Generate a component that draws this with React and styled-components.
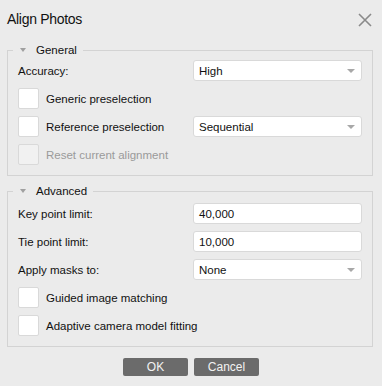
import React from "react";
import styled, { createGlobalStyle } from "styled-components";

const GlobalStyle = createGlobalStyle`
  body {
    margin: 0;
    background: #ebebeb;
    font-family: "Liberation Sans", Arial, sans-serif;
    color: #111;
  }
`;

const Dialog = styled.div`
  width: 382px;
  height: 386px;
  background: #ebebeb;
  display: flex;
  flex-direction: column;
  box-sizing: border-box;
  padding: 0 9px 0 7px;
`;

const Header = styled.div`
  height: 43px;
  box-sizing: border-box;
  padding-top: 11px;
  display: flex;
  align-items: flex-start;
  justify-content: space-between;
  padding-right: 1px;
`;

const Title = styled.div`
  font-size: 14px;
  line-height: 16px;
  letter-spacing: -0.3px;
  color: #111;
`;

const CloseBtn = styled.div`
  width: 14px;
  height: 14px;
  margin-top: 2px;
  display: flex;
  cursor: pointer;
`;

const Group = styled.fieldset`
  margin: 0 0 ${(p) => p.$gap || 0}px 0;
  padding: ${(p) => p.$top}px 10px 10px 10px;
  border: 1px solid #d3d3d3;
  min-width: 0;
`;

const Legend = styled.legend`
  margin-left: -5px;
  padding: 0 6px 0 7px;
  height: 14px;
  display: flex;
  align-items: center;
  font-size: 11.5px;
  color: #111;
`;

const Caret = styled.span`
  width: 0;
  height: 0;
  border-left: 3px solid transparent;
  border-right: 3px solid transparent;
  border-top: 4px solid #a0a0a0;
  margin-right: 10px;
`;

const Rows = styled.div`
  display: grid;
  grid-template-columns: 175px 1fr;
  grid-auto-rows: 21px;
  row-gap: 7px;
  align-items: center;
`;

const Label = styled.div`
  font-size: 11.5px;
  color: ${(p) => (p.$disabled ? "#9a9a9a" : "#111")};
  white-space: nowrap;
`;

const CheckRow = styled.label`
  display: flex;
  align-items: center;
  gap: 7px;
  grid-column: 1 / ${(p) => (p.$wide ? "span 2" : "span 1")};
`;

const Box = styled.span`
  width: 19px;
  height: 19px;
  border: 1px solid #d9d9d9;
  border-radius: 2px;
  background: ${(p) => (p.$disabled ? "#f1f1f1" : "#fff")};
  flex-shrink: 0;
`;

const Field = styled.div`
  height: 21px;
  box-sizing: border-box;
  border: 1px solid #d9d9d9;
  border-radius: 3px;
  background: #fff;
  display: flex;
  align-items: center;
  justify-content: space-between;
  padding: 0 6px 0 5px;
  font-size: 11.5px;
  color: #111;
`;

const Arrow = styled.span`
  width: 0;
  height: 0;
  border-left: 4px solid transparent;
  border-right: 4px solid transparent;
  border-top: 4px solid #a8a8a8;
`;

const Footer = styled.div`
  display: flex;
  justify-content: center;
  gap: 6px;
  margin-top: 11px;
  padding-left: 2px;
`;

const Button = styled.button`
  width: 65px;
  height: 18px;
  border: none;
  border-radius: 2px;
  background: #6b6b6b;
  color: #f2f2f2;
  font-family: "Liberation Sans", Arial, sans-serif;
  font-size: 12px;
  padding: 0;
  cursor: pointer;
`;

const Check = ({ label, disabled, wide }) => (
  <CheckRow $wide={wide}>
    <Box $disabled={disabled} />
    <Label $disabled={disabled}>{label}</Label>
  </CheckRow>
);

const Combo = ({ value }) => (
  <Field>
    {value}
    <Arrow />
  </Field>
);

export default function App() {
  return (
    <>
      <GlobalStyle />
      <Dialog>
        <Header>
          <Title>Align Photos</Title>
          <CloseBtn>
            <svg width="14" height="14" viewBox="0 0 14 14">
              <path d="M1 1 L13 13 M13 1 L1 13" stroke="#8a8a8a" strokeWidth="1.6" />
            </svg>
          </CloseBtn>
        </Header>

        <Group $top={3} $gap={8}>
          <Legend>
            <Caret />
            General
          </Legend>
          <Rows>
            <Label>Accuracy:</Label>
            <Combo value="High" />
            <Check label="Generic preselection" wide />
            <Check label="Reference preselection" />
            <Combo value="Sequential" />
            <Check label="Reset current alignment" disabled wide />
          </Rows>
        </Group>

        <Group $top={5}>
          <Legend>
            <Caret />
            Advanced
          </Legend>
          <Rows>
            <Label>Key point limit:</Label>
            <Field>40,000</Field>
            <Label>Tie point limit:</Label>
            <Field>10,000</Field>
            <Label>Apply masks to:</Label>
            <Combo value="None" />
            <Check label="Guided image matching" wide />
            <Check label="Adaptive camera model fitting" wide />
          </Rows>
        </Group>

        <Footer>
          <Button>OK</Button>
          <Button>Cancel</Button>
        </Footer>
      </Dialog>
    </>
  );
}
